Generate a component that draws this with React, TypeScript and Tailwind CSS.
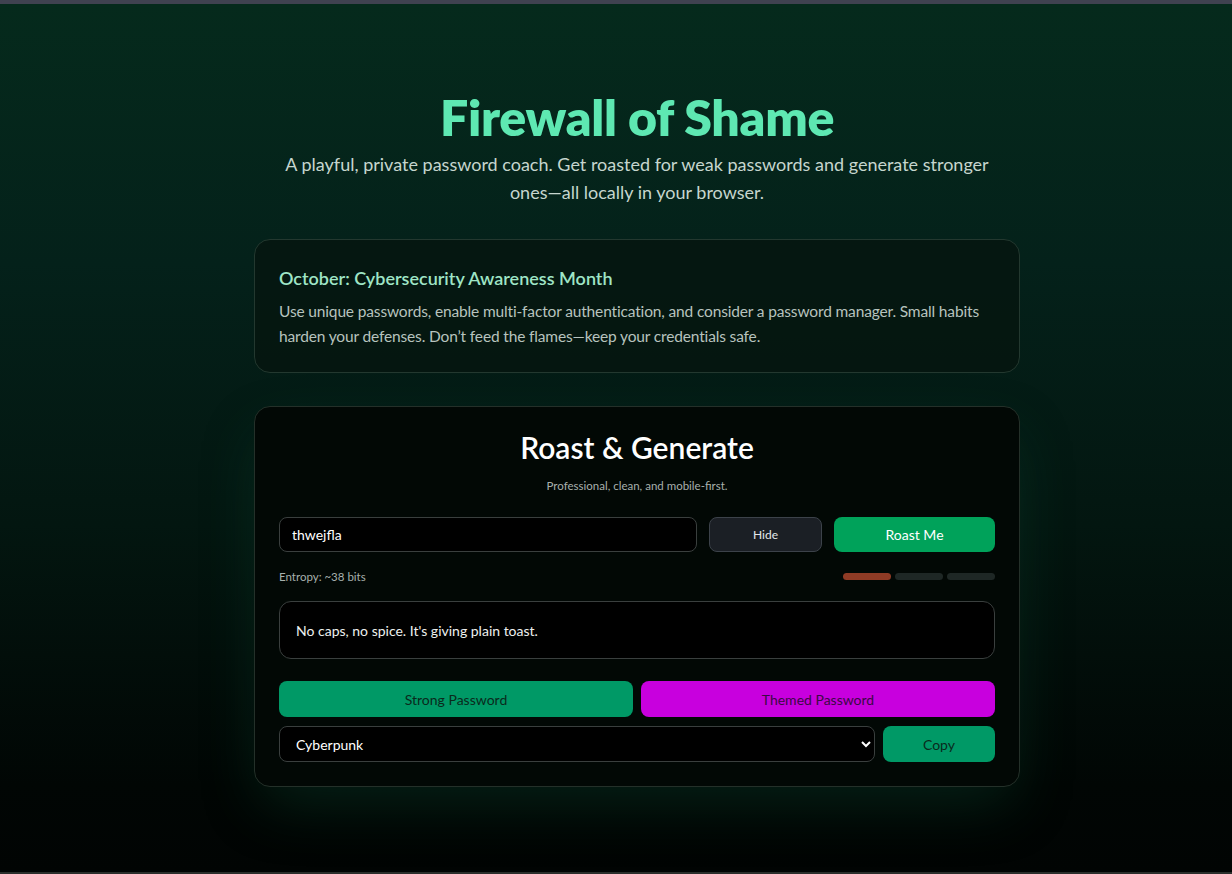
import { useState } from 'react'

const font = { fontFamily: 'Lato, "Noto Sans", sans-serif' } as const

export default function App() {
  const [pw, setPw] = useState('thwejfla')
  const [show, setShow] = useState(true)
  const [theme, setTheme] = useState('Cyberpunk')

  return (
    <div className="min-h-screen flex flex-col" style={font}>
      <div className="h-[4px] bg-[#3f4250]" />
      <main className="flex-1 bg-[linear-gradient(180deg,#052a1c_0%,#04211a_30%,#031610_60%,#010604_90%,#010403_100%)] pb-[80px]">
        <div className="flex flex-col items-center pl-[42px] pt-[87px]">
          <h1 className="text-[50px] leading-[52px] font-extrabold tracking-[-0.3px] text-[#5ee8b2]">Firewall of Shame</h1>
          <p className="mt-[7px] w-[730px] text-center text-[18px] leading-[28px] text-[#c6d6ce]">
            A playful, private password coach. Get roasted for weak passwords and generate stronger ones—all locally in your browser.
          </p>

          <section className="mt-[33px] w-[766px] rounded-2xl border border-[#23382f] bg-[#06150f]/80 px-[24px] pt-[26px] pb-[23px]">
            <h2 className="text-[18px] leading-[24px] font-semibold text-[#9fe5c6]">October: Cybersecurity Awareness Month</h2>
            <p className="mt-[9px] text-[15.5px] leading-[25px] tracking-[-0.15px] text-[#b7c3be]">
              Use unique passwords, enable multi-factor authentication, and consider a password manager. Small habits harden your defenses. Don’t feed the flames—keep your credentials safe.
            </p>
          </section>

          <section className="mt-[33px] w-[766px] rounded-2xl border border-[#243029] bg-[#020805] px-[24px] pt-[21px] pb-[24px] shadow-[0_24px_60px_-10px_rgba(16,90,60,0.35)]">
            <h2 className="text-center text-[30px] leading-[38px] font-semibold text-white">Roast &amp; Generate</h2>
            <p className="mt-[12px] text-center text-[11.5px] leading-[16px] text-[#a8b0ad]">Professional, clean, and mobile-first.</p>

            <div className="mt-[23px] flex items-center gap-[12px]">
              <input
                type={show ? 'text' : 'password'}
                value={pw}
                onChange={e => setPw(e.target.value)}
                className="h-[35px] flex-1 rounded-lg border border-[#3a3f3e] bg-black px-[12px] text-[14px] text-white outline-none"
              />
              <button
                onClick={() => setShow(s => !s)}
                className="h-[35px] w-[113px] rounded-lg border border-[#3c424a] bg-[#1b1f25] text-[12px] text-[#e4e7ea]"
              >
                {show ? 'Hide' : 'Show'}
              </button>
              <button className="h-[35px] w-[161px] rounded-lg bg-[#00a25a] text-[14px] text-white">Roast Me</button>
            </div>

            <div className="mt-[16px] flex items-center justify-between">
              <span className="text-[11.5px] text-[#a7b0ad]">Entropy: ~38 bits</span>
              <div className="flex gap-[4px]">
                <div className="h-[7px] w-[48px] rounded-full bg-[#8f3b25]" />
                <div className="h-[7px] w-[48px] rounded-full bg-[#1e2725]" />
                <div className="h-[7px] w-[48px] rounded-full bg-[#1e2725]" />
              </div>
            </div>

            <div className="mt-[16px] flex h-[58px] items-center rounded-xl border border-[#3a3f3e] bg-black px-[16px] text-[14px] text-[#eef0ef]">
              No caps, no spice. It's giving plain toast.
            </div>

            <div className="mt-[22px] grid grid-cols-2 gap-[8px]">
              <button className="h-[36px] rounded-lg bg-[#009966] text-[14px] text-[#0a2a1c]">Strong Password</button>
              <button className="h-[36px] rounded-lg bg-[#c800de] text-[14px] text-[#3a0a44]">Themed Password</button>
            </div>

            <div className="mt-[9px] flex gap-[8px]">
              <select
                value={theme}
                onChange={e => setTheme(e.target.value)}
                className="h-[36px] flex-1 rounded-lg border border-[#3a3f3e] bg-black px-[12px] text-[14px] text-white outline-none"
              >
                <option>Cyberpunk</option>
                <option>Fantasy</option>
                <option>Space</option>
              </select>
              <button className="h-[36px] w-[112px] rounded-lg bg-[#009966] text-[14px] text-[#0a2a1c]">Copy</button>
            </div>
          </section>
        </div>
      </main>
      <div className="h-[2px] bg-[#2a2e2c]" />
    </div>
  )
}
